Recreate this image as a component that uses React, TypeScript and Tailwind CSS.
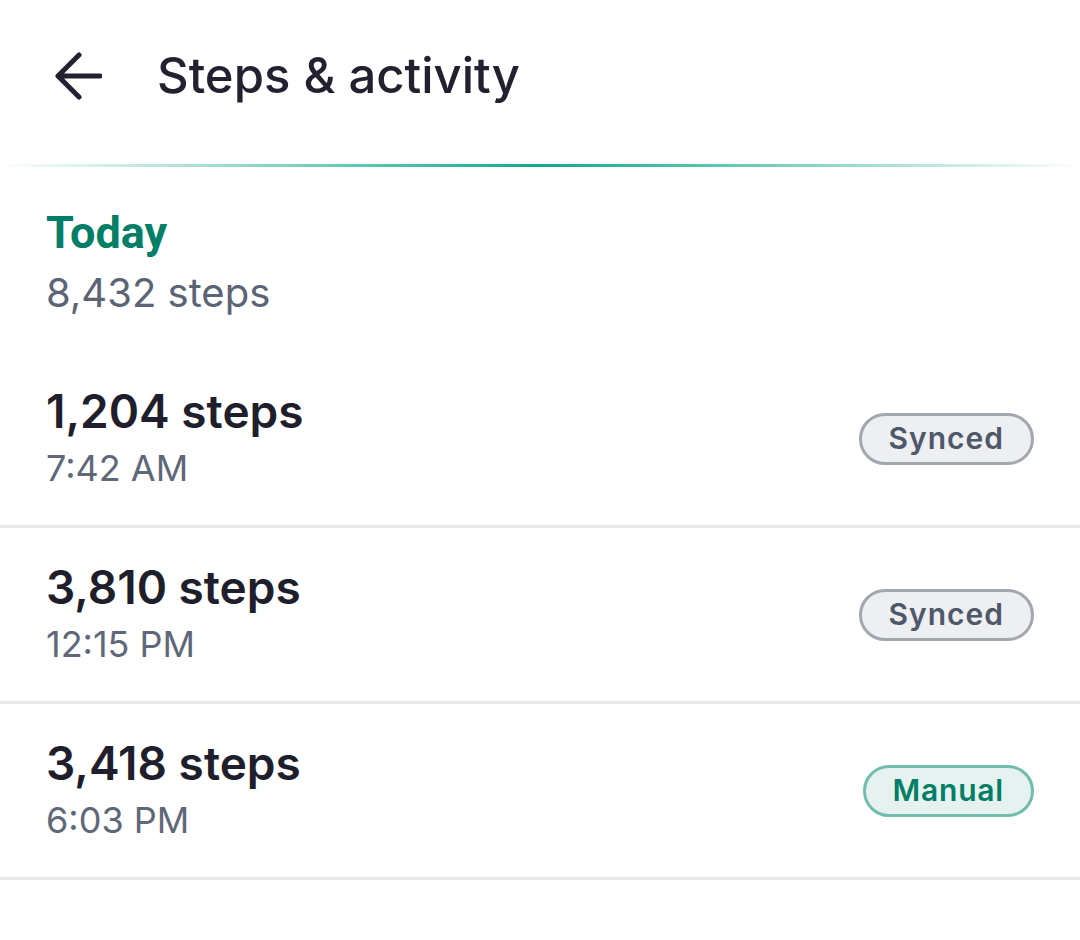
import React from "react";

type Entry = { steps: string; time: string; source: "Synced" | "Manual" };

const entries: Entry[] = [
  { steps: "1,204 steps", time: "7:42 AM", source: "Synced" },
  { steps: "3,810 steps", time: "12:15 PM", source: "Synced" },
  { steps: "3,418 steps", time: "6:03 PM", source: "Manual" },
];

function BackArrow() {
  return (
    <svg width="48" height="48" viewBox="0 0 48 48" fill="none" className="shrink-0">
      <path
        d="M46 24H4M25 3L4 24L25 45"
        stroke="#22212f"
        strokeWidth="5"
        strokeLinecap="round"
        strokeLinejoin="round"
      />
    </svg>
  );
}

function Badge({ source }: { source: Entry["source"] }) {
  if (source === "Manual") {
    return (
      <span className="inline-flex h-[52px] items-center rounded-full border-[3px] border-[#72bcad] bg-[#e6f2ef] px-[27px] text-[30px] font-semibold tracking-[0.8px] text-[#007e66]">
        Manual
      </span>
    );
  }
  return (
    <span className="inline-flex h-[52px] items-center rounded-full border-[3px] border-[#a2a6ae] bg-[#eeeff2] px-[27px] text-[30px] font-semibold tracking-[1px] text-[#4f5869]">
      Synced
    </span>
  );
}

export default function App() {
  return (
    <div className="min-h-[940px] w-[1080px] bg-white font-['Inter',sans-serif]">
      <header className="flex h-[164px] items-center gap-[55px] pb-[13px] pl-[54px]">
        <BackArrow />
        <h1 className="text-[49px] font-medium text-[#22212f]">Steps &amp; activity</h1>
      </header>
      <div className="h-[3px] bg-linear-to-r from-transparent via-[#12a88a] to-transparent" />

      <section className="px-[46px] pt-[36px] pb-[29px]">
        <h2 className="font-['Roboto',sans-serif] text-[45px] leading-[60px] font-bold text-[#007e66]">Today</h2>
        <p className="text-[40px] leading-[60px] text-[#5b6475]">8,432 steps</p>
      </section>

      <ul>
        {entries.map((e) => (
          <li
            key={e.steps}
            className="flex h-[176px] items-center justify-between border-b-[3px] border-[#e7e8ea] px-[46px]"
          >
            <div className="flex flex-col">
              <span className="text-[46px] leading-[56px] font-semibold text-[#1f1e2c]">{e.steps}</span>
              <span className="pt-[3px] text-[36px] leading-[52px] text-[#5f6878]">{e.time}</span>
            </div>
            <Badge source={e.source} />
          </li>
        ))}
      </ul>
    </div>
  );
}
